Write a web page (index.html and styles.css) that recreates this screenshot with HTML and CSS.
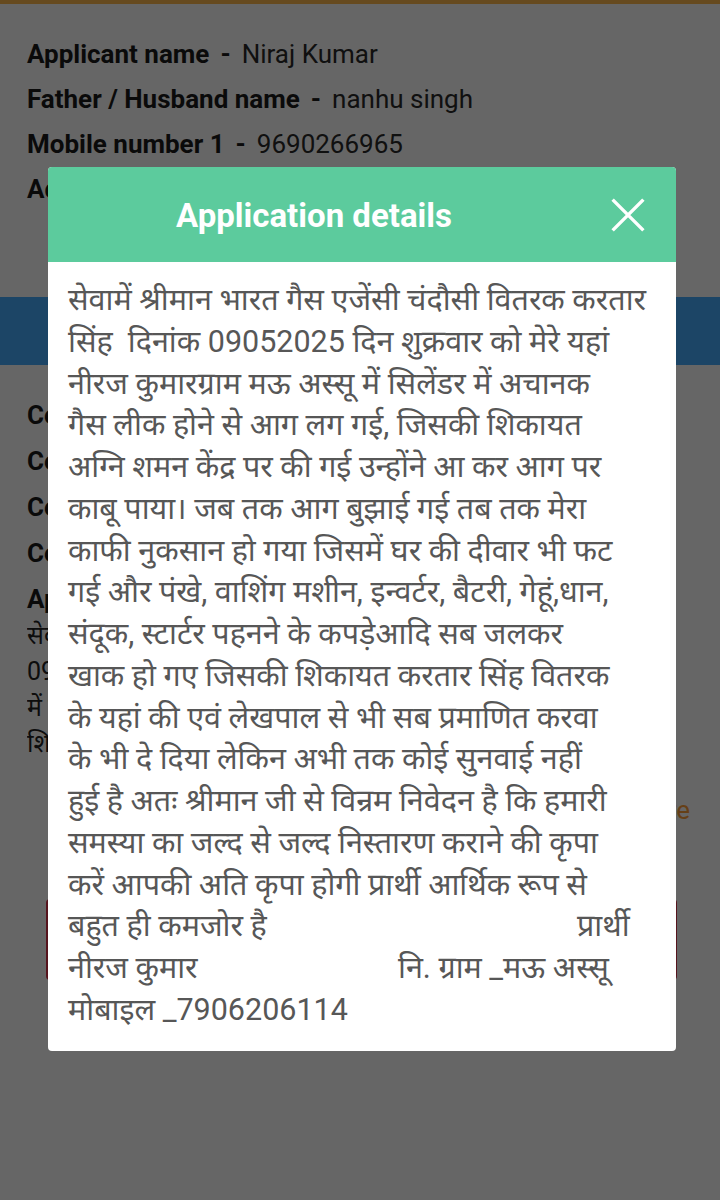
FILE: index.html
```html
<!DOCTYPE html>
<html lang="hi">
<head>
<meta charset="utf-8">
<title>Application details</title>
<link rel="stylesheet" href="styles.css">
</head>
<body>
<div class="page">
  <div class="topbar"></div>
  <section class="info first">
    <div class="row"><b class="label">Applicant name</b><span class="dash">-</span><span class="value">Niraj Kumar</span></div>
    <div class="row"><b class="label">Father / Husband name</b><span class="dash">-</span><span class="value">nanhu singh</span></div>
    <div class="row"><b class="label">Mobile number 1</b><span class="dash">-</span><span class="value">9690266965</span></div>
    <div class="row"><b class="label">Address</b><span class="dash">-</span><span class="value">ग्राम मऊ अस्सू</span></div>
  </section>
  <div class="band">Complaint details</div>
  <section class="info second">
    <div class="row"><b class="label">Complaint number</b><span class="dash">-</span><span class="value">2025051234</span></div>
    <div class="row"><b class="label">Complaint date</b><span class="dash">-</span><span class="value">10/05/2025</span></div>
    <div class="row"><b class="label">Complaint category</b><span class="dash">-</span><span class="value">Fire accident</span></div>
    <div class="row"><b class="label">Complaint status</b><span class="dash">-</span><span class="value">Pending</span></div>
    <div class="row"><b class="label">Application details</b><span class="dash">-</span></div>
    <div class="clamp">
      <div class="cl">सेवामें श्रीमान भारत गैस एजेंसी चंदौसी वितरक करतार सिंह दिनांक कि</div>
      <div class="cl">09052025 दिन शुक्रवार को मेरे यहां नीरज कुमारग्राम मऊ अस्सू</div>
      <div class="cl">में सिलेंडर में अचानक गैस लीक होने से आग लग गई, जिसकी</div>
      <div class="cl last">शिकायत अग्नि शमन केंद्र पर की गई उन्होंने आ कर आग पर काबू पाया। जब तक आग</div>
    </div>
    <div class="more">See more</div>
    <div class="action">Close complaint</div>
  </section>
</div>

<div class="overlay">
  <div class="modal" role="dialog" aria-label="Application details">
    <div class="modal-head">
      <h2 class="modal-title">Application details</h2>
      <button class="close" aria-label="Close">
        <svg viewBox="0 0 36 36" width="36" height="36"><path d="M3 3 L33 33 M33 3 L3 33" stroke="#fff" stroke-width="3.6" stroke-linecap="square" fill="none"/></svg>
      </button>
    </div>
    <div class="modal-body">
      <div class="ln">सेवामें श्रीमान भारत गैस एजेंसी चंदौसी वितरक करतार</div>
      <div class="ln">सिंह  दिनांक 09052025 दिन शुक्रवार को मेरे यहां</div>
      <div class="ln">नीरज कुमारग्राम मऊ अस्सू में सिलेंडर में अचानक</div>
      <div class="ln">गैस लीक होने से आग लग गई, जिसकी शिकायत</div>
      <div class="ln">अग्नि शमन केंद्र पर की गई उन्होंने आ कर आग पर</div>
      <div class="ln">काबू पाया। जब तक आग बुझाई गई तब तक मेरा</div>
      <div class="ln">काफी नुकसान हो गया जिसमें घर की दीवार भी फट</div>
      <div class="ln">गई और पंखे, वाशिंग मशीन, इन्वर्टर, बैटरी, गेहूं,धान,</div>
      <div class="ln">संदूक, स्टार्टर पहनने के कपड़ेआदि सब जलकर</div>
      <div class="ln">खाक हो गए जिसकी शिकायत करतार सिंह वितरक</div>
      <div class="ln">के यहां की एवं लेखपाल से भी सब प्रमाणित करवा</div>
      <div class="ln">के भी दे दिया लेकिन अभी तक कोई सुनवाई नहीं</div>
      <div class="ln">हुई है अतः श्रीमान जी से विन्रम निवेदन है कि हमारी</div>
      <div class="ln">समस्या का जल्द से जल्द निस्तारण कराने की कृपा</div>
      <div class="ln">करें आपकी अति कृपा होगी प्रार्थी आर्थिक रूप से</div>
      <div class="ln split"><span class="a1">बहुत ही कमजोर है</span><span>प्रार्थी</span></div>
      <div class="ln split"><span class="a2">नीरज कुमार</span><span>नि. ग्राम _मऊ अस्सू</span></div>
      <div class="ln">मोबाइल _7906206114</div>
    </div>
  </div>
</div>
</body>
</html>
```

FILE: styles.css
```css
* { box-sizing: border-box; }

html, body {
  margin: 0;
  padding: 0;
}

body {
  font-family: Roboto, "Noto Sans", "Noto Sans Devanagari", sans-serif;
  background: #ffffff;
  color: #222;
  width: 720px;
  height: 1200px;
  overflow: hidden;
}

.page {
  display: flex;
  flex-direction: column;
}

.topbar {
  height: 4px;
  background: #ffb94e;
}

.info {
  display: flex;
  flex-direction: column;
  padding: 0 27px;
}

.info.first {
  padding-top: 27px;
  height: 293px;
}

.info.second {
  padding-top: 27px;
}

.row {
  display: flex;
  align-items: center;
  gap: 11px;
  height: 45px;
  font-size: 26px;
  white-space: nowrap;
}

.info.second .row {
  height: 46px;
}

.label {
  font-weight: 700;
  color: #1a1a1a;
}

.value {
  color: #2a2a2a;
}

.dash {
  font-weight: 700;
  color: #1a1a1a;
}

.band {
  height: 68px;
  background: #46adff;
  color: #fff;
  font-size: 24px;
  font-weight: 700;
  display: flex;
  align-items: center;
  justify-content: center;
  padding: 0 27px;
}

.clamp {
  font-size: 25px;
  line-height: 36px;
  color: #222;
  margin-top: -4px;
}

.cl {
  white-space: nowrap;
  overflow: hidden;
  width: 666px;
}

.cl.last {
  text-overflow: ellipsis;
}

.more {
  margin-top: 30px;
  text-align: right;
  font-size: 26px;
  line-height: 36px;
  color: #ff9f3a;
  margin-right: 3px;
}

.action {
  margin: 71px 16px 0 19px;
  height: 81px;
  border: 2px solid #d8334a;
  border-radius: 4px;
  display: flex;
  align-items: center;
  justify-content: center;
  font-size: 24px;
  color: #d8334a;
  font-weight: 700;
}

/* Dialog overlay */
.overlay {
  position: fixed;
  inset: 0;
  background: rgba(0, 0, 0, 0.6);
  display: flex;
  flex-direction: column;
  padding: 167px 44px 0 48px;
}

.modal {
  background: #fff;
  border-radius: 4px;
  overflow: hidden;
  width: 628px;
}

.modal-head {
  height: 95px;
  background: #5ccb9d;
  display: flex;
  align-items: center;
}

.modal-title {
  flex: 1;
  margin: 0;
  text-align: center;
  color: #fff;
  font-size: 33px;
  font-weight: 700;
  padding-top: 2px;
}

.close {
  width: 96px;
  height: 95px;
  border: 0;
  padding: 0;
  background: transparent;
  display: flex;
  align-items: center;
  justify-content: center;
}

.close svg {
  display: block;
  width: 34px;
  height: 34px;
}

.modal-body {
  padding: 17px 20px 20px 20px;
  font-size: 30.5px;
  line-height: 41.75px;
  color: #575757;
}

.ln {
  white-space: pre;
}

.split {
  display: flex;
}

.a1 {
  width: 509px;
  flex: none;
}

.a2 {
  width: 330px;
  flex: none;
}
```
